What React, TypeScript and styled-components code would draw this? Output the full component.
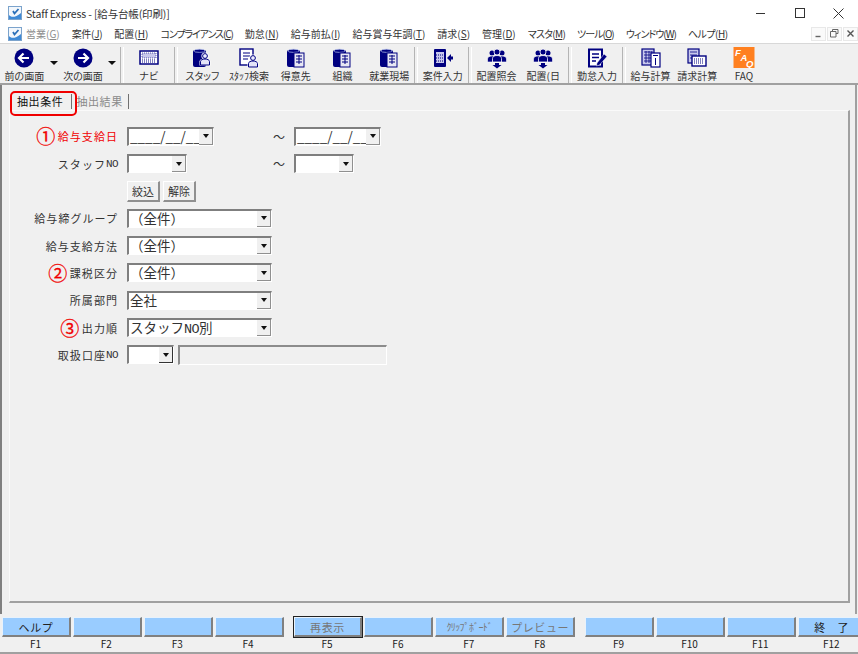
import React from "react";
import styled, { createGlobalStyle } from "styled-components";

const GlobalStyle = createGlobalStyle`
    html, body {
        margin: 0;
        padding: 0;
        width: 858px;
        height: 654px;
        overflow: hidden;
        background: #f0f0f0;
    }
    * {
        box-sizing: border-box;
    }
`;

const NAVY = "#000080";
const LILAC = "#c8c8ec";

const Page = styled.div`
    width: 858px;
    height: 654px;
    display: flex;
    flex-direction: column;
    overflow: hidden;
    background: #f0f0f0;
    color: #222;
    font-family: "Noto Sans CJK JP", "Noto Sans", sans-serif;
`;

const TitleBar = styled.div`
    height: 24px;
    flex: none;
    display: flex;
    align-items: center;
    padding: 2px 0 0 8px;
    background: #fff;
    font-size: 10.5px;
    font-feature-settings: "palt";
    letter-spacing: -0.15px;
    color: #333;
`;

const TitleText = styled.span`
    flex: 1;
    padding-left: 4px;
`;

const WinButton = styled.div`
    width: 39px;
    height: 18px;
    display: flex;
    align-items: center;
    justify-content: center;
`;

const MenuBar = styled.div`
    height: 20px;
    flex: none;
    display: flex;
    align-items: center;
    padding-left: 8px;
    background: #fff;
    border-bottom: 1px solid #d8d8d8;
    font-size: 10px;
    font-feature-settings: "palt";
`;

const MenuList = styled.div`
    flex: 1;
    display: flex;
    align-items: center;
    gap: 12px;
    padding-left: 4px;
`;

const MenuItem = styled.span<{ $off?: boolean; $squeeze?: number }>`
    color: ${(p) => (p.$off ? "#8c8c8c" : "#333")};
    letter-spacing: ${(p) => p.$squeeze ?? 0}px;
    white-space: nowrap;
`;

const MdiButton = styled.div`
    width: 15px;
    height: 14px;
    margin-left: 1px;
    display: flex;
    align-items: center;
    justify-content: center;
    background: #fafafa;
    border: 1px solid #e8e8e8;
`;

const Toolbar = styled.div`
    height: 41px;
    flex: none;
    display: flex;
    align-items: flex-start;
    padding-left: 1px;
    background: #f0f0f0;
    border-bottom: 2px solid #a0a0a0;
`;

const ToolButton = styled.div`
    width: 46.7px;
    height: 39px;
    flex: none;
    padding-top: 3px;
    display: flex;
    flex-direction: column;
    align-items: center;
    font-size: 10px;
    line-height: 13px;
    white-space: nowrap;
    font-feature-settings: "palt";
    color: #333;
`;

const ToolIcon = styled.svg`
    width: 22px;
    height: 22px;
    flex: none;
`;

const DropArrow = styled.div`
    width: 12px;
    height: 39px;
    flex: none;
    display: flex;
    justify-content: center;
    padding-top: 17px;
    &::after {
        content: "";
        width: 0;
        height: 0;
        border-left: 4px solid transparent;
        border-right: 4px solid transparent;
        border-top: 4px solid #111;
    }
`;

const ToolSep = styled.div`
    width: 7px;
    height: 36px;
    flex: none;
    margin-top: 3px;
    display: flex;
    justify-content: center;
    &::after {
        content: "";
        width: 2px;
        border-left: 1px solid #b4b4b4;
        border-right: 1px solid #fff;
    }
`;

const Main = styled.div`
    flex: 1;
    display: flex;
    flex-direction: column;
    position: relative;
    margin-right: 1px;
    padding: 0 5px 11px 7px;
    border-left: 2px solid #808080;
    border-right: 2px solid #a0a0a0;
`;

const TabRow = styled.div`
    height: 25px;
    flex: none;
    display: flex;
    align-items: flex-end;
    padding: 0 0 1px 8px;
    font-size: 11px;
    letter-spacing: 0.6px;
`;

const Tab = styled.div<{ $active?: boolean }>`
    height: 15px;
    line-height: 14px;
    padding-right: ${(p) => (p.$active ? "8px" : "5px")};
    margin-right: 4px;
    border-right: 1px solid #707070;
    color: ${(p) => (p.$active ? "#111" : "#8a8a8a")};
`;

const TabMark = styled.div`
    position: absolute;
    left: 8px;
    top: 6px;
    width: 67px;
    height: 25px;
    border: 2.5px solid #f00000;
    border-radius: 5px;
`;

const Panel = styled.div`
    flex: 1;
    display: flex;
    flex-direction: column;
    gap: 8px;
    padding: 15.8px 0 0 0;
    border-top: 1px solid #fafafa;
    border-left: 1px solid #fafafa;
    border-right: 2px solid #a0a0a0;
    border-bottom: 2px solid #a0a0a0;
`;

const Row = styled.div`
    height: 19.3px;
    display: flex;
    align-items: center;
    gap: 9px;
`;

const Label = styled.div<{ $red?: boolean }>`
    width: 108px;
    flex: none;
    display: flex;
    align-items: center;
    justify-content: flex-end;
    font-size: 11px;
    letter-spacing: 1.05px;
    white-space: nowrap;
    color: ${(p) => (p.$red ? "#f00000" : "#333")};
`;

const Narrow = styled.span`
    font-family: "Liberation Mono", monospace;
    letter-spacing: -0.6px;
`;

const Mark = styled.span`
    width: 18px;
    height: 18px;
    margin-right: 3px;
    display: flex;
    align-items: center;
    justify-content: center;
    font-size: 19px;
    line-height: 18px;
    letter-spacing: 0;
    color: #f00000;
    -webkit-text-stroke: 0.3px #f00000;
`;

const RangeCell = styled.div`
    width: 167px;
    flex: none;
    display: flex;
    align-items: center;
    margin-right: -9px;
`;

const Tilde = styled.span`
    width: 12px;
    margin-left: auto;
    margin-right: 9px;
    font-size: 12px;
    text-align: center;
    color: #333;
`;

const Field = styled.div<{ $w: number }>`
    width: ${(p) => p.$w}px;
    height: 19px;
    flex: none;
    display: flex;
    background: #fff;
    border-top: 2px solid #7f7f7f;
    border-left: 2px solid #7f7f7f;
    border-right: 1px solid #fff;
    border-bottom: 1px solid #fff;
`;

const FieldText = styled.div`
    flex: 1;
    min-width: 0;
    padding-left: 1px;
    white-space: nowrap;
    font-size: 13.5px;
    line-height: 15px;
    color: #333;
`;

const DropButton = styled.div<{ $dark?: boolean }>`
    width: 14px;
    flex: none;
    display: flex;
    align-items: center;
    justify-content: center;
    background: #f0f0f0;
    border-right: 1px solid ${(p) => (p.$dark ? "#333" : "#909090")};
    border-bottom: 1px solid ${(p) => (p.$dark ? "#333" : "#909090")};
    &::after {
        content: "";
        width: 0;
        height: 0;
        border-left: 3.5px solid transparent;
        border-right: 3.5px solid transparent;
        border-top: 4px solid #111;
    }
`;

const DisabledField = styled.div`
    width: 209px;
    height: 20px;
    margin-left: -5px;
    background: #f0f0f0;
    border-top: 2px solid #8c8c8c;
    border-left: 2px solid #8c8c8c;
    border-right: 1px solid #fff;
    border-bottom: 1px solid #fff;
`;

const SmallButton = styled.div`
    width: 33px;
    height: 21px;
    margin-right: -6px;
    display: flex;
    align-items: center;
    justify-content: center;
    background: #f0f0f0;
    border-top: 1px solid #fff;
    border-left: 1px solid #fff;
    border-right: 2px solid #909090;
    border-bottom: 2px solid #909090;
    font-size: 11px;
    color: #333;
`;

const Footer = styled.div`
    height: 40px;
    flex: none;
    display: flex;
    gap: 10px;
    padding: 3px 0 0 2px;
    background: #f0f0f0;
    border-bottom: 2px solid #a0a0a0;
`;

const KeyGroup = styled.div`
    display: flex;
    gap: 2px;
`;

const KeyCell = styled.div`
    width: 68.9px;
    display: flex;
    flex-direction: column;
    align-items: center;
`;

const KeyButton = styled.div<{ $focus?: boolean; $off?: boolean; $tight?: boolean }>`
    width: 100%;
    height: 20px;
    display: flex;
    align-items: center;
    justify-content: center;
    background: #99ccff;
    border-top: 1px solid #e8f2fc;
    border-left: 1px solid #e8f2fc;
    border-right: 2px solid #808080;
    border-bottom: 2px solid #808080;
    outline: ${(p) => (p.$focus ? "1px solid #222" : "none")};
    font-size: ${(p) => (p.$tight ? "10px" : "11px")};
    letter-spacing: ${(p) => (p.$tight ? "-0.6px" : "0.6px")};
    white-space: nowrap;
    color: ${(p) => (p.$off ? "#777" : "#222")};
`;

const KeyName = styled.div`
    margin-right: 2px;
    font-size: 10px;
    line-height: 13px;
    color: #222;
`;

const FaqLetter = styled.text`
    font-family: "Liberation Sans", sans-serif;
    font-size: 9.5px;
    font-weight: 700;
    font-style: italic;
    fill: #fff;
`;

const AppIcon = () => (
    <svg width="14" height="14" viewBox="0 0 14 14">
        <rect x="0.5" y="0.5" width="13" height="13" fill="#f2f7fc" stroke="#7ba3cc" />
        <path d="M1 9c2 2.500 6 3 12-2v6H1z" fill="#3f8ad6" />
        <path d="M5 5l1.500 2.500L10.500 3" fill="none" stroke="#2a6fb8" strokeWidth="1.800" />
    </svg>
);

const Arrow = ({ dir }: { dir: "left" | "right" }) => (
    <ToolIcon viewBox="0 0 22 22">
        <circle cx="11" cy="11" r="9.5" fill={NAVY} />
        <path
            d={dir === "left" ? "M16 11H6M10.5 6.5L6 11l4.5 4.5" : "M6 11h10M11.5 6.5L16 11l-4.5 4.5"}
            fill="none"
            stroke="#fff"
            strokeWidth="2.2"
        />
    </ToolIcon>
);

const NaviIcon = () => (
    <ToolIcon viewBox="0 0 22 22">
        <rect x="2" y="4" width="18" height="13" fill="#fff" stroke={NAVY} strokeWidth="1.5" />
        <rect x="4" y="6" width="14" height="5" fill={LILAC} stroke={NAVY} strokeWidth="0.6" strokeDasharray="1 1" />
        <path d="M4 13h14M4 15h14" stroke={NAVY} strokeDasharray="1 1" />
    </ToolIcon>
);

const Cylinder = () => (
    <>
        <rect x="2" y="3" width="13" height="17" rx="2" fill={NAVY} />
        <ellipse cx="8.5" cy="3.8" rx="5.5" ry="1.6" fill={NAVY} stroke="#b8c4ee" strokeWidth="0.7" />
    </>
);

const Person = ({ x, y }: { x: number; y: number }) => (
    <>
        <path
            d={`M${x - 5.5} ${y + 9.5}v-4c0-2 2-3 5.500-3s5.500 1 5.500 3v4z`}
            fill="#fff"
        />
        <circle cx={x} cy={y} r="3.6" fill="#fff" />
        <circle cx={x} cy={y} r="2.4" fill="#eef" stroke={NAVY} strokeWidth="1" />
        <path
            d={`M${x - 4.5} ${y + 9}v-3.500c0-1.500 2-2.500 4.500-2.500s4.500 1 4.500 2.500v3.500z`}
            fill="#e4e4f8"
            stroke={NAVY}
            strokeWidth="1"
        />
    </>
);

const StaffIcon = () => (
    <ToolIcon viewBox="0 0 22 22">
        <Cylinder />
        <Person x={14} y={9} />
    </ToolIcon>
);

const SearchIcon = () => (
    <ToolIcon viewBox="0 0 22 22">
        <rect x="2" y="2" width="13" height="16" fill="#fff" stroke={NAVY} strokeWidth="1.4" />
        <path d="M5 6h7M5 9h7M5 12h5" stroke={NAVY} />
        <Person x={15} y={11} />
    </ToolIcon>
);

const OrgIcon = () => (
    <ToolIcon viewBox="0 0 22 22">
        <Cylinder />
        <rect x="9" y="6" width="10" height="14" fill="#e8e8f4" stroke={NAVY} />
        <path d="M11 9h6M11 12h6M11 15h6M14 8v9" stroke={NAVY} />
    </ToolIcon>
);

const CaseIcon = () => (
    <ToolIcon viewBox="0 0 22 22">
        <rect x="2" y="2" width="12" height="18" rx="1" fill={NAVY} />
        <rect x="4" y="5" width="8" height="11" fill={LILAC} />
        <path d="M4 8h8M4 11h8M4 14h8" stroke={NAVY} strokeDasharray="1 1" />
        <path d="M15 11l4-4v2.5h2v3h-2V15z" fill={NAVY} />
    </ToolIcon>
);

const PlacementIcon = () => (
    <ToolIcon viewBox="0 0 22 22">
        <circle cx="6" cy="6" r="2.5" fill={NAVY} />
        <circle cx="16" cy="6" r="2.5" fill={NAVY} />
        <path d="M1.5 15v-3c0-2 2-3 4.500-3s4.500 1 4.500 3v3z" fill={NAVY} stroke="#fff" strokeWidth="0.6" />
        <path d="M11.500 15v-3c0-2 2-3 4.500-3s4.500 1 4.500 3v3z" fill={NAVY} stroke="#fff" strokeWidth="0.6" />
        <circle cx="11" cy="5" r="3" fill={NAVY} stroke="#fff" strokeWidth="0.8" />
        <path d="M6.500 15v-3.500c0-2 2-3 4.500-3s4.500 1 4.500 3V15z" fill={NAVY} stroke="#fff" strokeWidth="0.8" />
        <path d="M9 16h4v2h2.500L11 21.500 6.500 18H9z" fill={NAVY} />
    </ToolIcon>
);

const AttendIcon = () => (
    <ToolIcon viewBox="0 0 22 22">
        <rect x="3" y="2.500" width="13" height="17" fill="#fff" stroke={NAVY} strokeWidth="2" />
        <path d="M6 7h7M6 10.500h7M6 14h4" stroke={NAVY} strokeWidth="1.5" />
        <path d="M11 16l7-9 3 2.500-7.500 8.500-3 1z" fill={NAVY} stroke="#fff" strokeWidth="0.5" />
    </ToolIcon>
);

const PayIcon = () => (
    <ToolIcon viewBox="0 0 22 22">
        <rect x="2" y="2" width="12" height="16" fill={LILAC} stroke={NAVY} strokeWidth="1.2" />
        <path d="M4 5h8M4 8h8M4 11h8M4 14h8M6 4v12M9 4v12M12 4v12" stroke={NAVY} strokeWidth="0.8" />
        <rect x="11" y="6" width="9" height="14" fill="#fff" stroke={NAVY} strokeWidth="1.2" />
        <path d="M13 8.500h5M15.500 11v7" stroke={NAVY} />
    </ToolIcon>
);

const BillIcon = () => (
    <ToolIcon viewBox="0 0 22 22">
        <rect x="2" y="2" width="11" height="14" fill={LILAC} stroke={NAVY} strokeWidth="1.2" />
        <path d="M4 5h7M4 8h7M4 11h7" stroke={NAVY} strokeWidth="0.8" />
        <rect x="6" y="9" width="14" height="10" fill="#fff" stroke={NAVY} strokeWidth="1.4" />
        <path d="M8 12h10M8 14h10M8 16h10" stroke={NAVY} strokeDasharray="1 1" />
    </ToolIcon>
);

const FaqIcon = () => (
    <ToolIcon viewBox="0 0 22 22">
        <rect x="0.5" y="0" width="21" height="21" fill="#ff8020" />
        <FaqLetter x="2" y="9">F</FaqLetter>
        <FaqLetter x="7.500" y="14">A</FaqLetter>
        <FaqLetter x="13" y="19.500">Q</FaqLetter>
    </ToolIcon>
);

const menus: { name: string; key: string; squeeze?: number }[] = [
    { name: "案件", key: "J", squeeze: -0.3 },
    { name: "配置", key: "H" },
    { name: "コンプライアンス", key: "C", squeeze: -1.1 },
    { name: "勤怠", key: "N" },
    { name: "給与前払", key: "I" },
    { name: "給与賞与年調", key: "T" },
    { name: "請求", key: "S" },
    { name: "管理", key: "D" },
    { name: "マスタ", key: "M", squeeze: -0.7 },
    { name: "ツール", key: "O", squeeze: -1 },
    { name: "ウィンドウ", key: "W", squeeze: -1 },
    { name: "ヘルプ", key: "H", squeeze: -0.5 },
];

const toolGroups: { label: string; icon: React.ReactNode }[][] = [
    [{ label: "ナビ", icon: <NaviIcon /> }],
    [
        { label: "スタッフ", icon: <StaffIcon /> },
        { label: "ｽﾀｯﾌ検索", icon: <SearchIcon /> },
        { label: "得意先", icon: <OrgIcon /> },
        { label: "組織", icon: <OrgIcon /> },
        { label: "就業現場", icon: <OrgIcon /> },
    ],
    [{ label: "案件入力", icon: <CaseIcon /> }],
    [
        { label: "配置照会", icon: <PlacementIcon /> },
        { label: "配置(日", icon: <PlacementIcon /> },
    ],
    [{ label: "勤怠入力", icon: <AttendIcon /> }],
    [
        { label: "給与計算", icon: <PayIcon /> },
        { label: "請求計算", icon: <BillIcon /> },
        { label: "FAQ", icon: <FaqIcon /> },
    ],
];

type Key = { name: string; text?: string; off?: boolean; focus?: boolean; tight?: boolean };

const keyGroups: Key[][] = [
    [{ name: "F1", text: "ヘルプ" }, { name: "F2" }, { name: "F3" }, { name: "F4" }],
    [
        { name: "F5", text: "再表示", off: true, focus: true },
        { name: "F6" },
        { name: "F7", text: "ｸﾘｯﾌﾟﾎﾞｰﾄﾞ", off: true, tight: true },
        { name: "F8", text: "プレビュー", off: true },
    ],
    [{ name: "F9" }, { name: "F10" }, { name: "F11" }, { name: "F12", text: "終　了" }],
];

const comboRows: { label: string; value: React.ReactNode; mark?: string }[] = [
    { label: "給与締グループ", value: "（全件）" },
    { label: "給与支給方法", value: "（全件）" },
    { label: "課税区分", value: "（全件）", mark: "②" },
    { label: "所属部門", value: "全社" },
    {
        label: "出力順",
        value: (
            <>
                スタッフ<Narrow>NO</Narrow>別
            </>
        ),
        mark: "③",
    },
];

const App = () => {
    return (
        <Page>
            <GlobalStyle />
            <TitleBar>
                <AppIcon />
                <TitleText>Staff Express - [給与台帳(印刷)]</TitleText>
                <WinButton>
                    <svg width="10" height="10" viewBox="0 0 10 10">
                        <path d="M0 5.500h9" stroke="#333" />
                    </svg>
                </WinButton>
                <WinButton>
                    <svg width="10" height="10" viewBox="0 0 10 10">
                        <rect x="0.500" y="0.500" width="9" height="9" fill="none" stroke="#333" />
                    </svg>
                </WinButton>
                <WinButton>
                    <svg width="11" height="11" viewBox="0 0 11 11">
                        <path d="M0.500 0.500l10 10M10.500 0.500l-10 10" stroke="#333" />
                    </svg>
                </WinButton>
            </TitleBar>
            <MenuBar>
                <AppIcon />
                <MenuList>
                    <MenuItem $off>
                        営業(<u>G</u>)
                    </MenuItem>
                    {menus.map((menu) => (
                        <MenuItem key={menu.name} $squeeze={menu.squeeze}>
                            {menu.name}(<u>{menu.key}</u>)
                        </MenuItem>
                    ))}
                </MenuList>
                <MdiButton>
                    <svg width="9" height="9" viewBox="0 0 9 9">
                        <path d="M1.500 7.500h5" stroke="#666" strokeWidth="1.400" />
                    </svg>
                </MdiButton>
                <MdiButton>
                    <svg width="9" height="9" viewBox="0 0 9 9">
                        <path d="M2.500 2.500V0.500h5.500v4H6M0.500 2.500h5.500v5.500H0.500z" fill="none" stroke="#666" />
                    </svg>
                </MdiButton>
                <MdiButton>
                    <svg width="9" height="9" viewBox="0 0 9 9">
                        <path d="M1.500 1.500l6 6M7.500 1.500l-6 6" stroke="#555" strokeWidth="1.400" />
                    </svg>
                </MdiButton>
            </MenuBar>
            <Toolbar>
                <ToolButton>
                    <Arrow dir="left" />
                    前の画面
                </ToolButton>
                <DropArrow />
                <ToolButton>
                    <Arrow dir="right" />
                    次の画面
                </ToolButton>
                <DropArrow />
                {toolGroups.map((group, i) => (
                    <React.Fragment key={i}>
                        <ToolSep />
                        {group.map((tool) => (
                            <ToolButton key={tool.label}>
                                {tool.icon}
                                {tool.label}
                            </ToolButton>
                        ))}
                    </React.Fragment>
                ))}
            </Toolbar>
            <Main>
                <TabRow>
                    <Tab $active>抽出条件</Tab>
                    <Tab>抽出結果</Tab>
                </TabRow>
                <TabMark />
                <Panel>
                    <Row>
                        <Label $red>
                            <Mark>①</Mark>給与支給日
                        </Label>
                        <RangeCell>
                            <Field $w={87}>
                                <FieldText>____/__/__</FieldText>
                                <DropButton />
                            </Field>
                            <Tilde>～</Tilde>
                        </RangeCell>
                        <Field $w={87}>
                            <FieldText>____/__/__</FieldText>
                            <DropButton />
                        </Field>
                    </Row>
                    <Row>
                        <Label>
                            スタッフ<Narrow>NO</Narrow>
                        </Label>
                        <RangeCell>
                            <Field $w={60}>
                                <FieldText />
                                <DropButton />
                            </Field>
                            <Tilde>～</Tilde>
                        </RangeCell>
                        <Field $w={60}>
                            <FieldText />
                            <DropButton />
                        </Field>
                    </Row>
                    <Row>
                        <Label />
                        <SmallButton>絞込</SmallButton>
                        <SmallButton>解除</SmallButton>
                    </Row>
                    {comboRows.map((row) => (
                        <Row key={row.label}>
                            <Label>
                                {row.mark && <Mark>{row.mark}</Mark>}
                                {row.label}
                            </Label>
                            <Field $w={145}>
                                <FieldText>{row.value}</FieldText>
                                <DropButton />
                            </Field>
                        </Row>
                    ))}
                    <Row>
                        <Label>
                            取扱口座<Narrow>NO</Narrow>
                        </Label>
                        <Field $w={47}>
                            <FieldText />
                            <DropButton $dark />
                        </Field>
                        <DisabledField />
                    </Row>
                </Panel>
            </Main>
            <Footer>
                {keyGroups.map((group) => (
                    <KeyGroup key={group[0].name}>
                        {group.map((key) => (
                            <KeyCell key={key.name}>
                                <KeyButton $focus={key.focus} $off={key.off} $tight={key.tight}>
                                    {key.text}
                                </KeyButton>
                                <KeyName>{key.name}</KeyName>
                            </KeyCell>
                        ))}
                    </KeyGroup>
                ))}
            </Footer>
        </Page>
    );
};

export default App;
